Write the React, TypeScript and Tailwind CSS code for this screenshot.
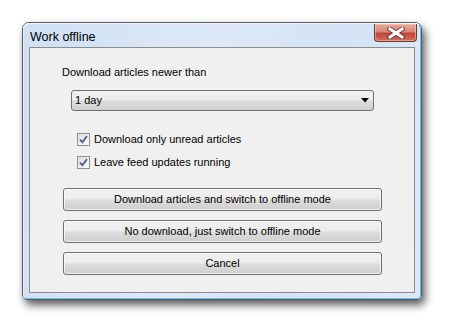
import React from "react";

const font = { fontFamily: '"Liberation Sans", Arial, sans-serif' };

function CloseGlyph() {
  return (
    <svg width="18" height="12" viewBox="0 0 18 12">
      <path d="M3 2 L15 10 M15 2 L3 10" stroke="#4a2520" strokeWidth="5" strokeLinecap="square" fill="none" opacity="0.7" />
      <path d="M3 2 L15 10 M15 2 L3 10" stroke="#ffffff" strokeWidth="3" strokeLinecap="square" fill="none" />
    </svg>
  );
}

function Check({ label }: { label: string }) {
  return (
    <label className="flex h-[13px] items-center gap-[4px] text-[11px] text-black">
      <span className="flex h-[13px] w-[13px] items-center justify-center border border-[#8e8f8f] bg-gradient-to-br from-[#dcdcdc] to-[#ffffff]">
        <svg width="9" height="9" viewBox="0 0 9 9">
          <path d="M1 4.5 L3.4 7.2 L8 1" stroke="#4a5d97" strokeWidth="1.8" fill="none" />
        </svg>
      </span>
      <span>{label}</span>
    </label>
  );
}

function Btn({ children }: { children: React.ReactNode }) {
  return (
    <button className="flex h-[23px] w-[319px] items-center justify-center rounded-[3px] border border-[#707070] bg-[linear-gradient(to_bottom,#f2f2f2_0%,#ebebeb_48%,#dddddd_52%,#cfcfcf_100%)] text-[11px] text-black shadow-[inset_0_0_0_1px_rgba(255,255,255,0.7)]">
      {children}
    </button>
  );
}

export default function App() {
  return (
    <div className="h-[325px] w-[450px] overflow-hidden bg-white pl-[22px] pt-[22px]" style={font}>
      <div className="h-[278px] w-[400px] rounded-t-[7px] rounded-b-[5px] border border-[#565b60] shadow-[3px_5px_9px_rgba(0,0,0,0.65)]">
        <div className="flex h-full flex-col rounded-t-[6px] rounded-b-[4px] border border-b-[#62bff0] border-l-[#e8f1fb] border-r-[#62bff0] border-t-[#f2f7fd] bg-[linear-gradient(100deg,#cfe0f3_0%,#dde9f7_45%,#d3e3f5_70%,#dce9f7_100%)]">
          <div className="flex h-[23px] items-start justify-between">
            <span className="pl-[6px] pt-[4px] text-[12.5px] text-black">Work offline</span>
            <div className="mr-[3px] flex h-[18px] w-[43px] items-center justify-center rounded-b-[4px] border border-t-0 border-[#6f3830] bg-[linear-gradient(to_bottom,#e9a89b_0%,#d9877a_45%,#c2453a_55%,#d0705f_100%)] shadow-[inset_0_0_0_1px_rgba(255,220,210,0.45)]">
              <CloseGlyph />
            </div>
          </div>
          <div className="mx-[5px] mb-[5px] flex flex-1 flex-col border border-[#8a8e93] bg-[#f0f0f0] pl-[32px]">
            <div className="mt-[18px] h-[13px] text-[11px] leading-[13px] text-black">Download articles newer than</div>
            <div className="ml-[9px] mt-[11px] flex h-[21px] w-[303px] items-center justify-between rounded-[3px] border border-[#707070] bg-[linear-gradient(to_bottom,#f2f2f2_0%,#ebebeb_48%,#dddddd_52%,#cfcfcf_100%)] pl-[3px] pr-[4px] text-[11px] text-black">
              <span>1 day</span>
              <svg width="8" height="5" viewBox="0 0 8 5">
                <path d="M0 0 H8 L4 4.5 Z" fill="#000" />
              </svg>
            </div>
            <div className="ml-[15px] mt-[22px]">
              <Check label="Download only unread articles" />
            </div>
            <div className="ml-[15px] mt-[10px]">
              <Check label="Leave feed updates running" />
            </div>
            <div className="ml-[1px] mt-[19px] flex flex-col gap-[9px]">
              <Btn>Download articles and switch to offline mode</Btn>
              <Btn>No download, just switch to offline mode</Btn>
              <Btn>Cancel</Btn>
            </div>
          </div>
        </div>
      </div>
    </div>
  );
}
